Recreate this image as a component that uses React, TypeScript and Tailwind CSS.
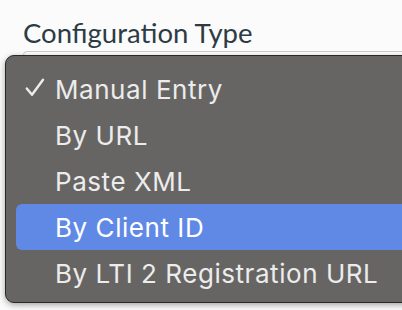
const options = [
  { label: 'Manual Entry', checked: true },
  { label: 'By URL' },
  { label: 'Paste XML' },
  { label: 'By Client ID', active: true },
  { label: 'By LTI 2 Registration URL' },
];

export default function App() {
  return (
    <div className="relative h-[310px] w-[402px] overflow-hidden bg-[#fbfbfb]">
      <div className="pl-[23px] pt-[16px]">
        <label className="block text-[27.5px] leading-[34px] text-[#2d3b45] [font-family:Lato,sans-serif]">
          Configuration Type
        </label>
        <div className="mt-[1px] h-[40px] w-[400px] rounded-[4px] border border-[#c7cdd1] bg-white" />
        <label className="mt-[214px] block text-[27.5px] leading-[34px] text-[#2d3b45] [font-family:Lato,sans-serif]">
          Consumer Key
        </label>
      </div>

      {/* open select menu */}
      <div className="absolute left-[5px] top-[55px] h-[248px] w-[420px] rounded-[9px] border border-[#2a2928] bg-[#676563] pt-[10px] shadow-[0_2px_6px_rgba(0,0,0,0.35)] [font-family:Inter,'Noto_Sans',sans-serif]">
        {options.map(o => (
          <div
            key={o.label}
            className={`relative mx-[10px] flex h-[46px] items-center rounded-[6px] pl-[39px] text-[26px] tracking-[0.55px] ${
              o.active ? 'bg-[#6089e6] text-white' : 'text-[#ececec]'
            }`}
          >
            {o.checked && (
              <svg
                width="20"
                height="19"
                viewBox="0 0 20 19"
                className="absolute left-[9px] top-[12px]"
                fill="none"
                stroke="#ececec"
                strokeWidth="2.4"
                strokeLinecap="round"
                strokeLinejoin="round"
              >
                <path d="M1.8 10.5 L7 16.8 L18 1.8" />
              </svg>
            )}
            {o.label}
          </div>
        ))}
      </div>
    </div>
  );
}
